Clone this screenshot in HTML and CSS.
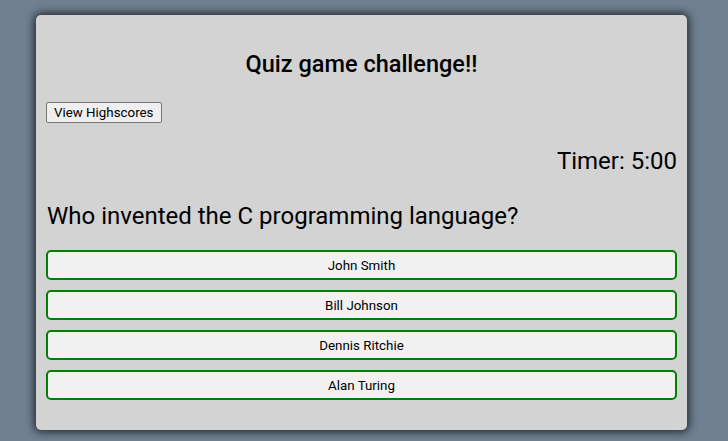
FILE: index.html
```html
<!DOCTYPE html>
<html>
<head>
<meta charset="utf-8">
<link rel="stylesheet" href="styles.css">
</head>
<body>
<main class="card">
  <h1 class="title">Quiz game challenge!!</h1>
  <div class="toolbar"><button class="hs-btn">View Highscores</button></div>
  <div class="timer">Timer: 5:00</div>
  <h2 class="question">Who invented the C programming language?</h2>
  <div class="answers">
    <button class="answer">John Smith</button>
    <button class="answer">Bill Johnson</button>
    <button class="answer">Dennis Ritchie</button>
    <button class="answer">Alan Turing</button>
  </div>
</main>
</body>
</html>
```
FILE: styles.css
```css
html, body {
  margin: 0;
  padding: 0;
}
body {
  background: #708090;
  font-family: Roboto, "Liberation Sans", sans-serif;
  color: #000;
  height: 441px;
  overflow: hidden;
}
.card {
  box-sizing: border-box;
  width: 651px;
  margin: 15px 0 0 36px;
  height: 415px;
  background: #d3d3d3;
  border-radius: 5px;
  box-shadow: 0 0 8px 2px rgba(20, 25, 30, 0.85);
  padding: 10px 10px 0 10px;
  display: flex;
  flex-direction: column;
}
.title {
  margin: 25px 0 0 0;
  font-size: 23.5px;
  font-weight: 500;
  text-align: center;
  line-height: 28px;
}
.toolbar {
  margin-top: 24px;
}
.hs-btn {
  font-family: Roboto, "Liberation Sans", sans-serif;
  font-size: 13.33px;
  padding: 2px 7px;
  height: 21px;
  background: #efefef;
  border: 1px solid #767676;
  border-radius: 2px;
  color: #000;
}
.timer {
  margin-top: 24px;
  text-align: right;
  font-size: 24px;
  line-height: 28px;
}
.question {
  margin: 27px 0 0 1px;
  font-size: 24px;
  font-weight: 400;
  line-height: 28px;
}
.answers {
  margin-top: 20px;
  display: flex;
  flex-direction: column;
  gap: 10px;
}
.answer {
  box-sizing: border-box;
  height: 30px;
  width: 100%;
  background: #f1f1f1;
  border: 2px solid #008000;
  border-radius: 5px;
  font-family: Roboto, "Liberation Sans", sans-serif;
  font-size: 13.33px;
  color: #000;
  padding: 0;
}
```
